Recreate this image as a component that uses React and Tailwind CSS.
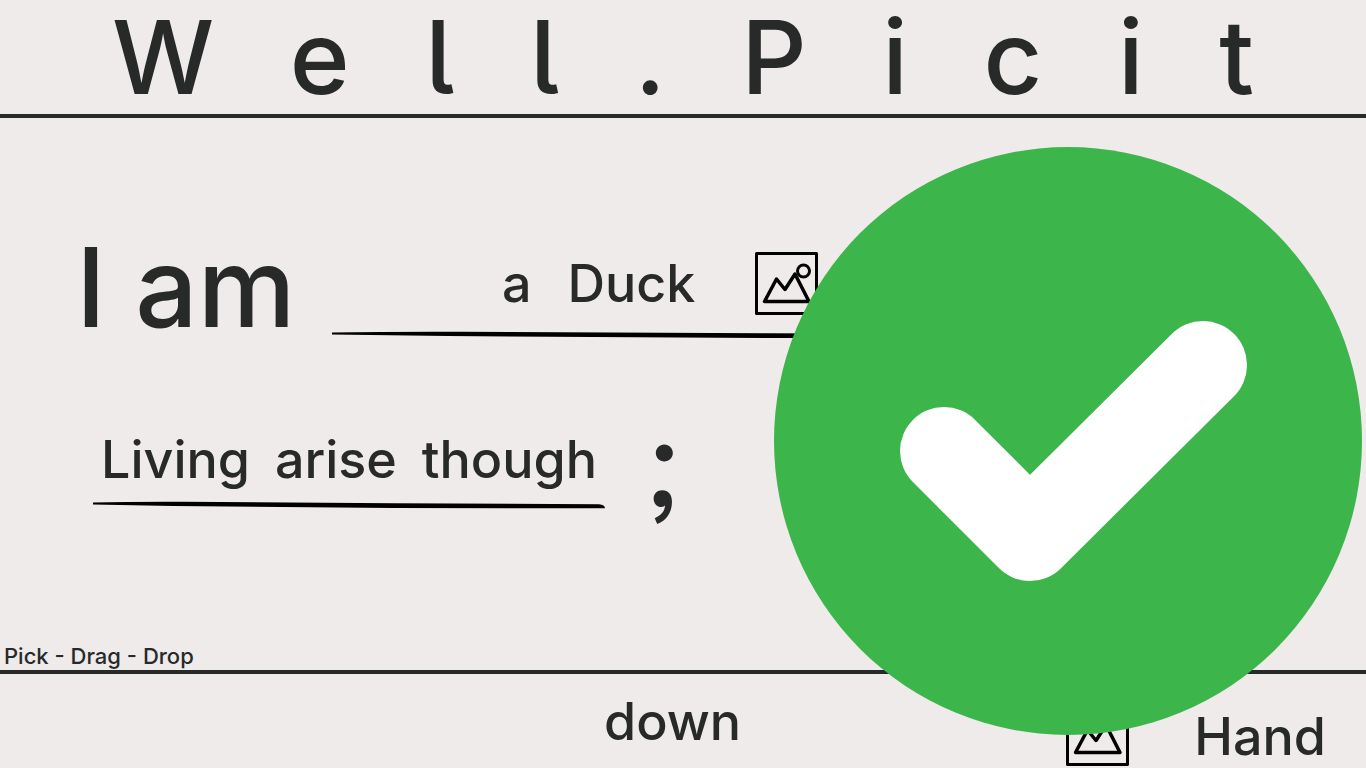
const TITLE = ['W', 'e', 'l', 'l', '.', 'P', 'i', 'c', 'i', 't'];

function Word({ children }) {
  return (
    <button type="button" draggable className="cursor-grab whitespace-nowrap text-[52px] leading-[68px]">
      {children}
    </button>
  );
}

function Picture() {
  return (
    <button type="button" draggable aria-label="Picture" className="h-16 w-16 shrink-0 cursor-grab text-black">
      <svg viewBox="0 0 64 64" fill="none" stroke="currentColor" strokeWidth="3" strokeLinejoin="round" className="h-16 w-16">
        <rect x="1.5" y="1.5" width="60" height="60" />
        <path d="M9.500 49.500 21.500 27 30 37.500 40 22 54 49.500Z" strokeWidth="3.500" />
        <circle cx="48.500" cy="19" r="6" />
      </svg>
    </button>
  );
}

function Stroke() {
  return (
    <svg viewBox="0 0 512 8" preserveAspectRatio="none" className="block h-2 w-full" aria-hidden="true">
      <path d="M0 1.500Q40 .6 90 .8L300 2.200 506 3.200Q512 3.800 512 7.300L300 7 80 5 0 3.500Z" fill="#000" />
    </svg>
  );
}

export default function App() {
  return (
    <div className="relative flex min-h-screen flex-col bg-[#efebea] font-['Inter',sans-serif] font-medium text-[#282a29]">
      <header className="border-b-4 border-[#282a29]">
        <h1 aria-label="Well.Picit" className="flex justify-between px-28 text-[102px] leading-[114px]">
          {TITLE.map((letter, i) => (
            <span key={i} className="[font-feature-settings:'cv05']">{letter}</span>
          ))}
        </h1>
      </header>

      <main className="flex flex-1 flex-col pt-[104px]">
        <section className="flex items-start pl-[76px]">
          <h2 className="w-64 whitespace-nowrap text-[110px] leading-[130px]">I am</h2>
          <div className="w-[740px] pt-[22px]">
            <div className="flex h-20 items-center pl-[170px]">
              <Word>a</Word>
              <div className="w-9" />
              <Word>Duck</Word>
              <div className="w-15" />
              <Picture />
            </div>
            <div className="pt-[7px]">
              <Stroke />
            </div>
          </div>
        </section>

        <section className="flex items-start pt-[70px] pl-[93px]">
          <div className="w-[512px]">
            <div className="flex h-[76px] items-center justify-between px-2">
              <Word>Living</Word>
              <Word>arise</Word>
              <Word>though</Word>
            </div>
            <div className="pt-[3px]">
              <Stroke />
            </div>
          </div>
          <span className="pl-10 text-[118px] leading-[82px] [font-feature-settings:'ss03']">;</span>
        </section>

        <p className="mt-auto pl-1 text-[22px] leading-7">Pick - Drag - Drop</p>
      </main>

      <footer className="flex h-[98px] items-start border-t-4 border-[#282a29] pt-[14px] pr-10 pl-[604px]">
        <Word>down</Word>
        <div className="ml-auto flex items-start gap-16 pt-[15px]">
          <Picture />
          <Word>Hand</Word>
        </div>
      </footer>

      <svg viewBox="0 0 588 588" role="img" aria-label="Correct" className="absolute top-[147px] right-1 w-[588px]">
        <circle cx="294" cy="294" r="294" fill="#3cb54a" />
        <path d="M170 304 256 390 429 218" fill="none" stroke="#fff" strokeWidth="88" strokeLinecap="round" strokeLinejoin="round" />
      </svg>
    </div>
  );
}
